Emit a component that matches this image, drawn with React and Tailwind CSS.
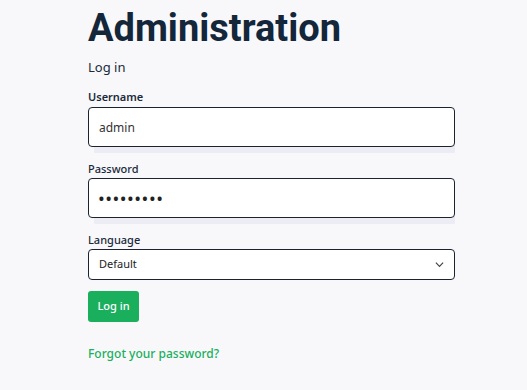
import React from 'react';

export default function App() {
  return (
    <div
      className="min-h-[390px] w-full bg-[#f8f8fb] text-[#1b2a3a]"
      style={{ fontFamily: '"Noto Sans", "Liberation Sans", sans-serif' }}
    >
      <div className="pl-[88px] w-[455px]">
        {/* Title */}
        <h1
          className="pt-[5px] text-[38px] leading-[47px] font-bold text-[#14263a]"
          style={{ fontFamily: 'Roboto, "Liberation Sans", sans-serif' }}
        >
          Administration
        </h1>
        <p className="mt-[6px] text-[13px] leading-[18px] text-[#1b2a3a]">Log in</p>

        <form className="mt-[14px] flex flex-col" onSubmit={(e) => e.preventDefault()}>
          {/* Username */}
          <label className="text-[11px] leading-[14px] font-semibold text-[#1b2a3a]">Username</label>
          <input
            defaultValue="admin"
            className="mt-[3px] h-[40px] w-full rounded-[4px] border border-[#1b2330] bg-white px-[10px] text-[12px] text-[#333] outline-none shadow-[3px_9px_0_-3px_#ecedf4]"
          />

          {/* Password */}
          <label className="mt-[15px] text-[11px] leading-[14px] font-medium text-[#1b2a3a]">Password</label>
          <input
            type="password"
            defaultValue="123456789"
            className="mt-[2px] h-[40px] w-full rounded-[4px] border border-[#1b2330] bg-white px-[9px] text-[18px] tracking-[0.5px] text-[#222] outline-none shadow-[3px_9px_0_-3px_#ecedf4]"
          />

          {/* Language */}
          <label className="mt-[15px] text-[11px] leading-[14px] font-medium text-[#1b2a3a]">Language</label>
          <div className="relative mt-[2px]">
            <select className="h-[31px] w-full appearance-none rounded-[4px] border border-[#1b2330] bg-white pl-[10px] text-[11px] text-[#222] outline-none">
              <option>Default</option>
            </select>
            <svg
              className="pointer-events-none absolute right-[11px] top-[11px] h-[9px] w-[9px] text-[#444]"
              viewBox="0 0 10 10"
              fill="none"
              stroke="currentColor"
              strokeWidth="1.3"
            >
              <path d="M1 3l4 4 4-4" />
            </svg>
          </div>

          {/* Submit */}
          <div className="mt-[11px]">
            <button
              type="submit"
              className="h-[31px] w-[51px] rounded-[3px] bg-[#1aaf5d] text-[11px] font-medium text-white"
            >
              Log in
            </button>
          </div>

          <a href="#" className="mt-[24px] text-[12px] leading-[16px] font-medium text-[#1aaf5d]">
            Forgot your password?
          </a>
        </form>
      </div>
    </div>
  );
}
